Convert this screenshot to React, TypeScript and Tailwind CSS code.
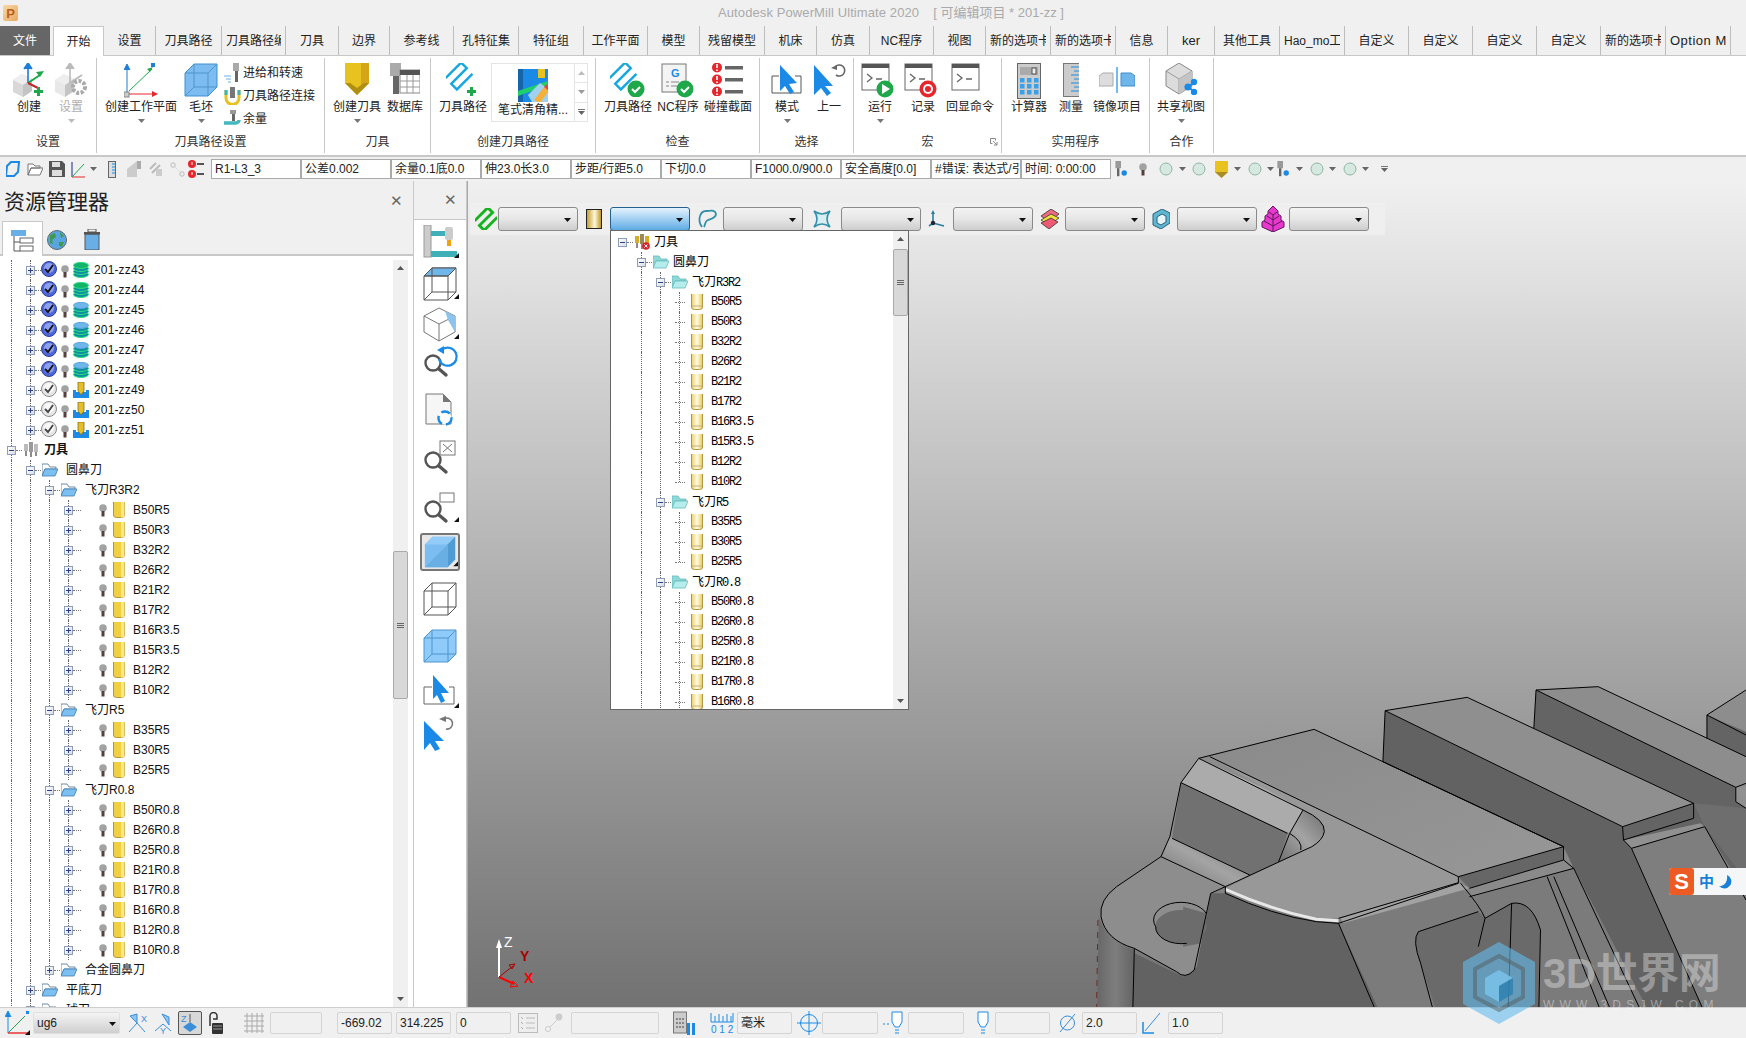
import React from 'react'

const S = ({ w, h, v, children, className }: { w: number; h: number; v?: string; children: React.ReactNode; className?: string }) => (
  <svg width={w} height={h} viewBox={v ?? `0 0 ${w} ${h}`} className={`block shrink-0 ${className ?? ''}`}>
    {children}
  </svg>
)

const BLUE = '#1a8ae6'
const GREEN = '#1fa84a'

// ── small shared drawings ──
const Caret = ({ c = '#666' }: { c?: string }) => (
  <S w={7} h={4}><path d="M0 0h7L3.5 4z" fill={c} /></S>
)
const Plus = () => <path d="M0 5h3V2h3v3h3v3H6v3H3V8H0z" fill={GREEN} />
const CheckBadge = ({ x, y }: { x: number; y: number }) => (
  <g transform={`translate(${x} ${y})`}>
    <circle r="8.5" fill="#1fa84a" />
    <path d="M-4 0l3 3 5-5" stroke="#fff" strokeWidth="2" fill="none" />
  </g>
)
const Meander = ({ c, sw = 2.4 }: { c: string; sw?: number }) => (
  <path d="M2 5H24V13H2V21H24" transform="rotate(-45 13 13)" fill="none" stroke={c} strokeWidth={sw} />
)
const GrayCube = ({ o = '#d8d8d8' }: { o?: string }) => (
  <g>
    <path d="M0 8l9-6 10 5v12l-9 6-10-5z" fill={o} />
    <path d="M0 8l10 5 9-6-10-5z" fill="#eeeeee" />
    <path d="M10 13v12l9-6V7z" fill="#c4c4c4" />
  </g>
)
const Undo = ({ c = '#666', w = 15 }: { c?: string; w?: number }) => (
  <S w={w} h={w} v="0 0 15 15">
    <path d="M4 4a5.5 5.5 0 1 1 1 8" stroke={c} strokeWidth="1.6" fill="none" />
    <path d="M0 5l6-3v5z" fill={c} />
  </S>
)
const Terminal = ({ badge }: { badge?: React.ReactNode }) => (
  <S w={38} h={36}>
    <rect x="1" y="1" width="27" height="26" fill="#fff" stroke="#666" />
    <rect x="1" y="1" width="27" height="4" fill="#555" />
    <path d="M6 11l5 4-5 4M15 16h6" stroke="#666" strokeWidth="1.3" fill="none" />
    {badge}
  </S>
)
const Magnifier = () => (
  <g>
    <circle cx="11" cy="14" r="7.5" fill="#fff" stroke="#555" strokeWidth="2.4" />
    <path d="M17 20l7 6" stroke="#555" strokeWidth="3.4" strokeLinecap="round" />
  </g>
)
const Corner = () => <path d="M38 28v5h-5z" fill="#111" />
const Cube3 = ({ fill, top, stroke = '#555' }: { fill?: string; top?: string; stroke?: string }) => (
  <g fill="none" stroke={stroke} strokeWidth="1">
    <path d="M3 10l8-8h24v24l-8 8H3z" fill={fill ?? 'none'} />
    {top ? <path d="M3 10l8-8h24l-8 8z" fill={top} /> : null}
    <path d="M3 10h24v24M27 10l8-8M11 2v24h24M11 26l-8 8" />
  </g>
)
const ToolBig = ({ w = 24, h = 32 }: { w?: number; h?: number }) => (
  <S w={w} h={h} v="0 0 24 32">
    <path d="M0 0h24v20L12 32 0 20z" fill="#e8c21e" />
    <path d="M16 0h8v20l-8 8z" fill="#d4a516" />
    <path d="M0 20l12 12 12-12-5 0-7 5-7-5z" fill="#b08f10" />
  </S>
)
const Spindle = ({ h = 16, eye }: { h?: number; eye?: boolean }) => (
  <S w={16} h={h} v="0 0 16 20">
    <rect x="1" y="0" width="7" height="9" fill="#999" />
    <path d="M3 9h3v10H3z" fill="#666" />
    {eye ? <circle cx="12" cy="15" r="3.4" fill={BLUE} /> : null}
  </S>
)
const Orb = () => <S w={14} h={14}><circle cx="7" cy="7" r="6" fill="#d6e9e0" stroke="#8fb5a5" /></S>

// ── tree icons ──
const Bulb = () => (
  <S w={8} h={13}>
    <circle cx="4" cy="4" r="3.8" fill="#a2a2a2" />
    <rect x="2.5" y="7" width="3" height="5.5" fill="#54403f" />
  </S>
)
const TreeBox = ({ open }: { open?: boolean }) => (
  <span className="relative z-10 flex h-[9px] w-[9px] shrink-0 items-center justify-center border border-[#8f9db5] bg-gradient-to-br from-white to-[#d8dde6]">
    <span className="absolute h-px w-[5px] bg-[#2c3f8a]" />
    {open ? null : <span className="absolute h-[5px] w-px bg-[#2c3f8a]" />}
  </span>
)
const Folder = ({ teal }: { teal?: boolean }) => (
  <S w={16} h={14}>
    <path d="M0 1h6l2 3h6v2H3L0 13z" fill={teal ? '#8fd8d8' : '#fff'} stroke={teal ? '#6bb' : '#4a6f8f'} strokeWidth=".8" />
    <path d="M3 6h13l-3 7H0z" fill={teal ? '#b5ecec' : '#7cc0f2'} stroke={teal ? '#6bb' : '#3f7fb5'} strokeWidth=".8" />
  </S>
)
const GoldTool = ({ solid }: { solid?: boolean }) => (
  <S w={12} h={16}>
    <defs>
      <linearGradient id="gt" x1="0" x2="1" y1="0" y2="0">
        <stop offset="0" stopColor="#ecd06a" />
        <stop offset=".5" stopColor="#fffbe6" />
        <stop offset="1" stopColor="#ecca58" />
      </linearGradient>
    </defs>
    <path d="M.5 0v13q0 2.5 3 2.5h5q3 0 3-2.5V0" fill={solid ? '#f0cf40' : 'url(#gt)'} stroke="#b0963c" />
    {solid ? <path d="M8 0h3.5v13q0 2.5-3 2.5H8z" fill="#f8e88a" /> : <path d="M1 12h10" stroke="#c9b27a" />}
  </S>
)
const Check = ({ on }: { on?: boolean }) => (
  <S w={16} h={16}>
    <circle cx="8" cy="8" r="7.5" fill={on ? '#4f68d8' : '#e6e6e6'} stroke={on ? '#2f3f9a' : '#8a8a8a'} />
    <circle cx="8" cy="7" r="5" fill={on ? '#8d9ff0' : '#f8f8f8'} />
    <path d="M4 8l3 3 5-7" stroke={on ? '#111' : '#444'} strokeWidth="1.8" fill="none" />
  </S>
)
const Stack = ({ top }: { top: string }) => (
  <S w={16} h={16}>
    {[12.5, 9.5, 6.5].map((y) => (
      <ellipse key={y} cx="8" cy={y} rx="7.5" ry="3" fill="#0f8fa0" stroke="#2ce080" />
    ))}
    <ellipse cx="8" cy="3.4" rx="7.5" ry="3" fill={top} stroke={top === '#6fb6ea' ? '#5aa5dc' : '#2ce080'} />
  </S>
)
const PathTool = () => (
  <S w={16} h={16}>
    <path d="M0 8l3 0 0 4h10V8h3v8H0z" fill={BLUE} />
    <path d="M0 10h16v6H0z" fill={BLUE} />
    <path d="M5 0h6v9l-3 4-3-4z" fill="#e3bf2c" stroke="#7a5f10" strokeWidth=".7" />
  </S>
)
const TreeRoot = ({ red }: { red?: boolean }) => (
  <S w={16} h={16}>
    <rect x="1" y="2" width="4" height="7" fill={red ? '#d9a928' : '#bbb'} />
    <rect x="6" y="0" width="4" height="10" fill={red ? '#9a8a5a' : '#999'} />
    <rect x="11" y="2" width="4" height="8" fill={red ? '#d9a928' : '#bbb'} />
    <path d="M3 9v5M8 10v5M13 10v4" stroke="#666" strokeWidth="1.5" />
    {red ? <><circle cx="12" cy="12" r="3.8" fill="#d8232a" /><path d="M10.5 10.5l3 3M13.5 10.5l-3 3" stroke="#fff" /></> : null}
  </S>
)

// ── tree rows ──
const Guides = ({ xs, last }: { xs: number[]; last?: boolean }) => (
  <>
    {xs.map((x, i) => (
      <span
        key={x}
        className={`absolute top-0 border-l border-dotted border-[#666] ${last && i === xs.length - 1 ? 'h-1/2' : 'h-full'}`}
        style={{ left: x }}
      />
    ))}
  </>
)

const Dots = ({ w = 6 }: { w?: number }) => (
  <span className="shrink-0 border-t border-dotted border-[#777]" style={{ width: w }} />
)

type Node = { d: number; t: string; k: 'zz' | 'zzp' | 'zzt' | 'root' | 'folder' | 'leaf'; open?: boolean }

const zz = (n: number, k: Node['k']): Node => ({ d: 1, t: `201-zz${n}`, k })
const leaves = (names: string[]): Node[] => names.map((t) => ({ d: 3, t, k: 'leaf' as const }))
const R3R2 = ['B50R5', 'B50R3', 'B32R2', 'B26R2', 'B21R2', 'B17R2', 'B16R3.5', 'B15R3.5', 'B12R2', 'B10R2']
const R5 = ['B35R5', 'B30R5', 'B25R5']

const LEFT: Node[] = [
  zz(43, 'zz'), zz(44, 'zz'), zz(45, 'zzp'), zz(46, 'zzp'), zz(47, 'zzp'), zz(48, 'zzp'),
  zz(49, 'zzt'), zz(50, 'zzt'), zz(51, 'zzt'),
  { d: 0, t: '刀具', k: 'root', open: true },
  { d: 1, t: '圆鼻刀', k: 'folder', open: true },
  { d: 2, t: '飞刀R3R2', k: 'folder', open: true },
  ...leaves(R3R2),
  { d: 2, t: '飞刀R5', k: 'folder', open: true },
  ...leaves(R5),
  { d: 2, t: '飞刀R0.8', k: 'folder', open: true },
  ...leaves(['B50R0.8', 'B26R0.8', 'B25R0.8', 'B21R0.8', 'B17R0.8', 'B16R0.8', 'B12R0.8', 'B10R0.8']),
  { d: 2, t: '合金圆鼻刀', k: 'folder' },
  { d: 1, t: '平底刀', k: 'folder' },
  { d: 1, t: '球刀', k: 'folder' },
]

const LeftRow = ({ n }: { n: Node }) => {
  const xs = [11, 30, 49, 68].slice(0, n.d + 1)
  return (
    <div className="relative flex h-5 items-center whitespace-nowrap" style={{ paddingLeft: 7 + 19 * n.d }}>
      <Guides xs={xs} />
      <TreeBox open={n.open} />
      {n.k === 'root' && (
        <>
          <Dots />
          <span className="ml-px"><TreeRoot /></span>
          <span className="ml-[5px] font-bold">{n.t}</span>
        </>
      )}
      {n.k === 'folder' && (
        <>
          <Dots />
          <span className="ml-px"><Folder /></span>
          <span className="ml-2">{n.t}</span>
        </>
      )}
      {n.k === 'leaf' && (
        <>
          <Dots w={8} />
          <span className="ml-[18px]"><Bulb /></span>
          <span className="ml-[6px]"><GoldTool solid /></span>
          <span className="ml-2">{n.t}</span>
        </>
      )}
      {(n.k === 'zz' || n.k === 'zzp' || n.k === 'zzt') && (
        <>
          <Dots />
          <span className="relative z-10 -mt-0.5"><Check on={n.k !== 'zzt'} /></span>
          <span className="relative z-10 ml-1 mt-0.5"><Bulb /></span>
          <span className="relative z-10 ml-1">
            {n.k === 'zzt' ? <PathTool /> : <Stack top={n.k === 'zz' ? '#12b36a' : '#6fb6ea'} />}
          </span>
          <span className="ml-[5px] tracking-[0.15px]">{n.t}</span>
        </>
      )}
    </div>
  )
}

const MONO = "font-['Liberation_Mono'] tracking-[-1.2px]"
const DROP: (Node & { last?: boolean; cjk?: string })[] = [
  { d: 0, t: '刀具', k: 'root', open: true },
  { d: 1, t: '圆鼻刀', k: 'folder', open: true },
  { d: 2, t: 'R3R2', cjk: '飞刀', k: 'folder', open: true },
  ...leaves(R3R2).map((n, i) => ({ ...n, last: i === 9 })),
  { d: 2, t: 'R5', cjk: '飞刀', k: 'folder', open: true },
  ...leaves(R5).map((n, i) => ({ ...n, last: i === 2 })),
  { d: 2, t: 'R0.8', cjk: '飞刀', k: 'folder', open: true },
  ...leaves(['B50R0.8', 'B26R0.8', 'B25R0.8', 'B21R0.8', 'B17R0.8', 'B16R0.8']),
]

const DropRow = ({ n }: { n: (typeof DROP)[number] }) => {
  const xs = [30, 49, 68].slice(0, n.d)
  return (
    <div className="relative flex h-5 items-center whitespace-nowrap text-black" style={{ paddingLeft: 7 + 19 * n.d }}>
      <Guides xs={xs} last={n.last} />
      {n.k === 'leaf' ? (
        <>
          <Dots w={10} />
          <span className="ml-[6px]"><GoldTool /></span>
          <span className={`ml-2 ${MONO}`}>{n.t}</span>
        </>
      ) : (
        <>
          <TreeBox open />
          <Dots />
          <span className="ml-px">{n.k === 'root' ? <TreeRoot red /> : <Folder teal />}</span>
          <span className="ml-1">
            {n.cjk ? <>{n.cjk}<span className={MONO}>{n.t}</span></> : n.t}
          </span>
        </>
      )}
    </div>
  )
}

// ── ribbon ──
const TABS: [string, number][] = [
  ['设置', 52], ['刀具路径', 66], ['刀具路径编辑', 64], ['刀具', 53], ['边界', 51], ['参考线', 64], ['孔特征集', 65], ['特征组', 65],
  ['工作平面', 64], ['模型', 52], ['残留模型', 65], ['机床', 52], ['仿真', 53], ['NC程序', 64], ['视图', 52], ['新的选项卡', 65], ['新的选项卡', 65],
  ['信息', 52], ['ker', 47], ['其他工具', 65], ['Hao_mo工具', 65], ['自定义', 64], ['自定义', 64], ['自定义', 64], ['自定义', 64], ['新的选项卡', 65], ['Option Manager', 65],
]

const Btn = ({ w, label, caret, muted, children }: { w: string; label: string; caret?: boolean; muted?: boolean; children: React.ReactNode }) => (
  <div className={`flex shrink-0 flex-col items-center ${w}`}>
    <div className="flex h-[37px] w-full items-start justify-center">{children}</div>
    <div className={`h-[14px] whitespace-nowrap leading-[14px] ${muted ? 'text-[#b0b0b0]' : ''}`}>{label}</div>
    {caret ? <div className="mt-[5px]"><Caret c={muted ? '#bbb' : '#777'} /></div> : null}
  </div>
)

const Group = ({ w, pl, label, children, corner }: { w: string; pl: string; label: string; children: React.ReactNode; corner?: boolean }) => (
  <div className={`relative flex h-[95px] shrink-0 flex-col border-r border-[#c8c8c8] ${w}`}>
    <div className={`flex h-[73px] pt-[5px] ${pl}`}>{children}</div>
    <div className="flex h-[22px] items-center justify-center leading-none text-[#333]">{label}</div>
    {corner ? (
      <span className="absolute bottom-[7px] right-[3px]">
        <S w={8} h={8}><path d="M.5.5h5v2M.5.5v5h2M3 3l4 4M7 4v3H4" stroke="#888" fill="none" /></S>
      </span>
    ) : null}
  </div>
)

const SmallRow = ({ label, icon }: { label: string; icon: React.ReactNode }) => (
  <div className="flex h-[23px] items-center gap-[3px] whitespace-nowrap">
    <span className="flex w-[16px] justify-center">{icon}</span>
    <span>{label}</span>
  </div>
)

const Ribbon = () => (
  <div className="flex h-[101px] shrink-0 border-b-2 border-[#c8c8c8] bg-white pt-[2px] text-[12px] text-[#222]">
    <Group w="w-[97px]" pl="pl-2" label="设置">
      <Btn w="w-[42px]" label="创建">
        <S w={34} h={34}>
          <g transform="translate(1 9)"><GrayCube /></g>
          <path d="M16 20V2M12 6l4-6 4 6" stroke="#1c7fd6" strokeWidth="1.6" fill="#1c7fd6" />
          <path d="M16 20l12-8" stroke={GREEN} strokeWidth="2" /><path d="M32 8l-8 1 4 5z" fill={GREEN} />
          <path d="M16 20l10 5" stroke="#c0262a" strokeWidth="2" />
          <g transform="translate(22 22)"><Plus /></g>
        </S>
      </Btn>
      <Btn w="w-[42px]" label="设置" caret muted>
        <S w={34} h={34}>
          <g transform="translate(1 9)"><GrayCube o="#e8e8e8" /></g>
          <path d="M16 20V2M12 6l4-6 4 6" stroke="#bbb" strokeWidth="1.6" fill="#bbb" />
          <path d="M16 20l12-8" stroke="#bbb" strokeWidth="2" />
          <circle cx="25" cy="24" r="6" fill="none" stroke="#aaa" strokeWidth="4" strokeDasharray="3 1.5" />
        </S>
      </Btn>
    </Group>
    <Group w="w-[228px]" pl="pl-[6px]" label="刀具路径设置">
      <Btn w="w-[76px]" label="创建工作平面" caret>
        <S w={34} h={36}>
          <rect x="0" y="29" width="5" height="5" fill="#ccc" stroke="#888" />
          <path d="M3 29V3M0 7l3-6 3 6" stroke="#1c7fd6" strokeWidth="1" fill="#1c7fd6" />
          <path d="M5 28L28 6" stroke={GREEN} /><path d="M29 4l-6 2 3 3z" fill={GREEN} />
          <path d="M5 31h27" stroke="#e5262a" /><path d="M34 31l-6-3v6z" fill="#e5262a" />
          <rect x="27" y="0" width="4" height="4" fill="#1c7fd6" />
        </S>
      </Btn>
      <Btn w="w-[44px]" label="毛坯" caret>
        <S w={34} h={34}>
          <path d="M1 10l9-9h23v23l-9 9H1z" fill="#7cbcf0" stroke="#3f8fd0" />
          <path d="M1 10h23v23M24 10l9-9M10 1v23h23M10 24l-9 9" stroke="#4f95cc" fill="none" />
        </S>
      </Btn>
      <div className="-mt-[2px] ml-[1px] flex flex-col">
        <SmallRow label="进给和转速" icon={
          <S w={16} h={20}><path d="M0 13h7M2 16h5M4 19h3" stroke="#6aaee6" /><rect x="9" y="0" width="6" height="8" fill="#aaa" /><rect x="11" y="8" width="3" height="11" fill="#666" /></S>
        } />
        <SmallRow label="刀具路径连接" icon={
          <S w={17} h={18}><path d="M2 3v8a6 6 0 0 0 13 0V3" stroke="#e8c21e" strokeWidth="3" fill="none" /><path d="M2 3v5M15 3v5" stroke="#3fb5b5" strokeWidth="3" /><rect x="6" y="0" width="5" height="11" fill="#777" /></S>
        } />
        <SmallRow label="余量" icon={
          <S w={17} h={18}><rect x="6" y="0" width="6" height="4" fill="#999" /><rect x="8" y="4" width="3" height="7" fill="#666" /><path d="M0 13h12a3 3 0 0 0 3-3" stroke="#45b7bf" strokeWidth="3.5" fill="none" /></S>
        } />
      </div>
    </Group>
    <Group w="w-[106px]" pl="pl-[5px]" label="刀具">
      <Btn w="w-[54px]" label="创建刀具" caret><ToolBig /></Btn>
      <Btn w="w-[42px]" label="数据库">
        <S w={30} h={34}>
          <rect x="0" y="0" width="11" height="13" fill="#aaa" /><rect x="3" y="13" width="6" height="18" fill="#666" />
          <rect x="10" y="7" width="20" height="23" fill="#fff" stroke="#888" /><rect x="10" y="7" width="20" height="5" fill="#555" />
          <path d="M10 18h20M10 24h20M17 12v18M23 12v18" stroke="#999" />
        </S>
      </Btn>
    </Group>
    <Group w="w-[165px]" pl="pl-[5px]" label="创建刀具路径">
      <Btn w="w-[54px]" label="刀具路径">
        <S w={34} h={34}>
          <Meander c="#17a7e0" />
          <g transform="translate(21 22)"><Plus /></g>
        </S>
      </Btn>
      <div className="ml-px flex h-[59px] w-[97px] border border-[#e4e4e4]">
        <div className="flex w-[82px] flex-col items-center pt-[5px]">
          <S w={30} h={33}>
            <rect x="0" y="0" width="30" height="33" fill="#1a8ae6" /><path d="M0 0h5v33H0z" fill="#1565a8" />
            <path d="M0 22l30-10v4L0 27z" fill="#1fd06a" /><path d="M20 0h7v9h-7z" fill="#e8c21e" />
            <path d="M10 26l12-12 8 6v13H14z" fill="#9fd2f2" />
            <path d="M16 31l10-13 5 4-9 12z" fill="#f4b23c" /><path d="M26 18l3-3 5 4-3 3z" fill="#e5453a" />
          </S>
          <span className="mt-[1px] whitespace-nowrap leading-[14px]">笔式清角精...</span>
        </div>
        <div className="flex flex-1 flex-col border-l border-[#e4e4e4]">
          <div className="flex flex-1 items-center justify-center border-b border-[#e4e4e4]"><S w={7} h={4}><path d="M0 4h7L3.5 0z" fill="#bbb" /></S></div>
          <div className="flex flex-1 items-center justify-center border-b border-[#e4e4e4]"><Caret c="#999" /></div>
          <div className="flex flex-1 flex-col items-center justify-center gap-px"><span className="h-px w-[7px] bg-[#777]" /><Caret /></div>
        </div>
      </div>
    </Group>
    <Group w="w-[164px]" pl="pl-[6px]" label="检查">
      <Btn w="w-[52px]" label="刀具路径">
        <S w={36} h={34}>
          <Meander c="#17a7e0" />
          <CheckBadge x={26} y={26} />
        </S>
      </Btn>
      <Btn w="w-[48px]" label="NC程序">
        <S w={34} h={35}>
          <rect x="1" y="1" width="24" height="28" fill="#f4f4f4" stroke="#777" />
          <text x="10" y="14" fontSize="11" fontWeight="700" fill="#1a8ae6" fontFamily="Liberation Sans">G</text>
          <path d="M5 19h3M10 19h8M5 23h3M10 23h6" stroke="#888" />
          <CheckBadge x={24} y={26} />
        </S>
      </Btn>
      <Btn w="w-[52px]" label="碰撞截面">
        <S w={32} h={33}>
          {[0, 12, 24].map((y) => (
            <g key={y}>
              <circle cx="5" cy={y + 4.5} r="5" fill="#e5262a" />
              <path d={`M5 ${y + 1}v4M5 ${y + 6.5}v1.5`} stroke="#fff" strokeWidth="1.6" />
              <rect x="13" y={y + 3} width="18" height="3.5" fill="#666" />
            </g>
          ))}
        </S>
      </Btn>
    </Group>
    <Group w="w-[94px]" pl="pl-[7px]" label="选择">
      <Btn w="w-[40px]" label="模式" caret>
        <S w={32} h={34}>
          <path d="M1 13v17h29V13h-6M1 13h7" stroke="#555" fill="none" />
          <path d="M9 2l17 18-8 1 5 8-4 2-5-8-5 5z" fill={BLUE} />
        </S>
      </Btn>
      <Btn w="w-[44px]" label="上一">
        <div className="relative">
          <S w={34} h={34}><path d="M2 2l19 21-8 0 6 7-4 3-6-8-7 7z" fill={BLUE} /></S>
          <span className="absolute right-0 top-0"><Undo /></span>
        </div>
      </Btn>
    </Group>
    <Group w="w-[148px]" pl="pl-[2px]" label="宏" corner>
      <Btn w="w-[48px]" label="运行" caret>
        <Terminal badge={<g><circle cx="24" cy="26" r="8.5" fill={GREEN} /><path d="M21 21l8 5-8 5z" fill="#fff" /></g>} />
      </Btn>
      <Btn w="w-[38px]" label="记录">
        <Terminal badge={<g><circle cx="24" cy="26" r="8.5" fill="#e5262a" /><circle cx="24" cy="26" r="5" fill="#fff" /><circle cx="24" cy="26" r="3" fill="#e5262a" /></g>} />
      </Btn>
      <Btn w="w-[56px]" label="回显命令"><Terminal /></Btn>
    </Group>
    <Group w="w-[148px]" pl="pl-[4px]" label="实用程序">
      <Btn w="w-[46px]" label="计算器">
        <S w={24} h={36}>
          <rect x=".5" y=".5" width="23" height="35" fill="#ccc" stroke="#666" />
          <rect x="3" y="4" width="18" height="8" fill="#aaa" /><rect x="15" y="5" width="4" height="6" fill="#eee" stroke="#555" />
          {[15, 21, 27].map((y) => [3, 10, 17].map((x) => <rect key={`${x}${y}`} x={x} y={y} width="4.5" height="4.5" fill="#3aa0ea" />))}
        </S>
      </Btn>
      <Btn w="w-[38px]" label="测量">
        <S w={16} h={34}>
          <rect x=".5" y=".5" width="16" height="33" fill="#ccc" stroke="#777" />
          <path d="M16 4h-8M16 8h-5M16 12h-8M16 16h-5M16 20h-8M16 24h-5M16 28h-8" stroke={BLUE} />
        </S>
      </Btn>
      <Btn w="w-[54px]" label="镜像项目">
        <S w={36} h={30}>
          <path d="M0 13l4-3h10v13H0z" fill="#ddd" stroke="#aaa" /><path d="M22 10h10l4 3v10H22z" fill="#6fb6ea" stroke="#3f8fd0" />
          <path d="M18 4v26" stroke={BLUE} strokeWidth="1.2" />
        </S>
      </Btn>
    </Group>
    <Group w="w-[64px]" pl="pl-[3px]" label="合作">
      <Btn w="w-[56px]" label="共享视图" caret>
        <S w={32} h={32}>
          <path d="M1 8l13-8 13 8v15L14 31 1 23z" fill="#dcdcdc" stroke="#888" />
          <path d="M1 8l13 8 13-8M14 16v15" stroke="#999" fill="none" /><path d="M14 16l13-8v15l-13 8z" fill="#c4c4c4" />
          <path d="M23 24l7-5M23 24l7 5" stroke={BLUE} strokeWidth="2" />
          <circle cx="23" cy="24" r="3.6" fill={BLUE} /><circle cx="29" cy="19" r="3.2" fill={BLUE} /><circle cx="29" cy="29" r="3.2" fill={BLUE} />
        </S>
      </Btn>
    </Group>
  </div>
)

const FIELDS = ['R1-L3_3', '公差0.002', '余量0.1底0.0', '伸23.0长3.0', '步距/行距5.0', '下切0.0', 'F1000.0/900.0', '安全高度[0.0]', '#错误: 表达式/引用', '时间: 0:00:00']

const QuickBar = () => (
  <div className="flex h-[24px] shrink-0 items-center text-[12px] text-[#222]">
    <div className="ml-[6px] flex w-[205px] items-center">
      <span className="w-[18px]"><S w={14} h={16}><path d="M1 5l4-4h8l-1 10-4 4H0z" fill="none" stroke={BLUE} strokeWidth="2" /></S></span>
      <span className="ml-[3px] w-[22px]"><S w={16} h={13}><path d="M1 1h5l2 2h5v2H4L1 12zM4 5h12l-3 7H1z" fill="#fff" stroke="#777" /></S></span>
      <span className="w-[22px]"><S w={16} h={16}><path d="M0 0h13l3 3v13H0z" fill="#555" /><rect x="3" y="1" width="8" height="5" fill="#ddd" /><rect x="3" y="9" width="10" height="6" fill="#ddd" /></S></span>
      <span className="w-[16px]"><S w={15} h={17}><path d="M1 16V1M1 16h13" stroke="#e5262a" /><path d="M1 1v15" stroke={BLUE} /><path d="M1 16L13 3" stroke={GREEN} /></S></span>
      <span className="ml-[3px] w-[16px]"><Caret /></span>
      <span className="ml-[2px] w-[19px]"><S w={8} h={17}><rect x=".5" y=".5" width="7" height="16" fill="#ddd" stroke="#666" /><path d="M7 3H4M7 6H4M7 9H4M7 12H4" stroke={BLUE} /></S></span>
      <span className="w-[21px]"><S w={15} h={16}><path d="M0 16V8l10-8v16z" fill="#ccc" /><rect x="10" y="0" width="4" height="8" fill="#aaa" /></S></span>
      <span className="w-[22px]"><S w={15} h={16}><path d="M2 8l6-6M4 12l8-8" stroke="#bbb" strokeWidth="2" /><rect x="8" y="8" width="6" height="7" fill="#ccc" /></S></span>
      <span className="w-[18px]"><S w={15} h={15}><circle cx="3" cy="3" r="2.2" fill="none" stroke="#bbb" /><circle cx="12" cy="12" r="2.2" fill="none" stroke="#bbb" /><path d="M5 5l5 5" stroke="#ccc" strokeDasharray="1 1" /></S></span>
      <span><S w={16} h={18}><circle cx="4" cy="4" r="4" fill="#e5262a" /><circle cx="4" cy="14" r="4" fill="#e5262a" /><rect x="9" y="3" width="7" height="2" fill="#555" /><rect x="9" y="13" width="7" height="2" fill="#555" /><path d="M4 2v3M4 12v3" stroke="#fff" /></S></span>
    </div>
    <div className="flex">
      {FIELDS.map((f) => (
        <div key={f} className="h-[20px] w-[90px] shrink-0 overflow-hidden whitespace-nowrap border border-[#aaa] bg-white pl-[3px] leading-[18px]">{f}</div>
      ))}
    </div>
    <div className="flex items-center">
      <span className="ml-[2px]"><Spindle eye /></span>
      <span className="ml-[10px]"><Bulb /></span>
      <span className="ml-3"><Orb /></span>
      <span className="ml-[6px]"><Caret /></span>
      <span className="ml-[6px]"><Orb /></span>
      <span className="ml-[9px]"><S w={13} h={17}><path d="M0 0h13v11l-6.5 6L0 11z" fill="#e8c21e" /><path d="M0 11l6.5 6 6.5-6z" fill="#a88b2a" /></S></span>
      <span className="ml-[6px]"><Caret /></span>
      <span className="ml-[7px]"><Orb /></span>
      <span className="ml-[5px]"><Caret /></span>
      <span className="ml-px"><Spindle eye /></span>
      <span className="ml-[5px]"><Caret /></span>
      <span className="ml-[7px]"><Orb /></span>
      <span className="ml-[5px]"><Caret /></span>
      <span className="ml-[7px]"><Orb /></span>
      <span className="ml-[5px]"><Caret /></span>
      <span className="ml-3 flex flex-col items-center gap-px"><span className="h-px w-[7px] bg-[#777]" /><Caret /></span>
    </div>
  </div>
)

// ── viewport bits ──
const Combo = ({ active }: { active?: boolean }) => (
  <div className={`relative h-[24px] w-[80px] shrink-0 rounded-[3px] border ${active ? 'border-[#25618f] bg-gradient-to-b from-[#e4f3fd] to-[#5cabe4]' : 'border-[#8a8a8a] bg-gradient-to-b from-[#f3f3f3] via-[#e6e6e6] to-[#cdcdcd]'}`}>
    <span className="absolute right-[6px] top-[10px]"><Caret c="#111" /></span>
  </div>
)

const Slot = ({ w, children }: { w: string; children?: React.ReactNode }) => (
  <div className={`flex shrink-0 items-center justify-center ${w}`}>{children}</div>
)

const ViewBar = () => (
  <div className="absolute left-[2px] top-[22px] flex h-[32px] w-[915px] items-center bg-[#f0f0f0]/80 pl-[3px]">
    <Slot w="w-[25px]">
      <S w={22} h={22} v="0 0 26 26"><Meander c="#17b21f" sw={3.4} /></S>
    </Slot>
    <Combo />
    <Slot w="w-[32px]">
      <S w={16} h={20}>
        <defs><linearGradient id="gb" x1="0" x2="1" y1="0" y2="0"><stop offset="0" stopColor="#c29a24" /><stop offset=".55" stopColor="#fff7d8" /><stop offset="1" stopColor="#b58f1f" /></linearGradient></defs>
        <rect x=".5" y=".5" width="15" height="19" fill="url(#gb)" stroke="#222" />
      </S>
    </Slot>
    <Combo active />
    <Slot w="w-[33px]"><S w={20} h={20}><path d="M5 18C0 11 3 2 9 2 13 2 18 0 19 5 19 9 14 10 11 11 8 12 8 16 7 18" fill="none" stroke="#3390a8" strokeWidth="1.8" /></S></Slot>
    <Combo />
    <Slot w="w-[38px]"><S w={18} h={18}><path d="M1 1Q9 7 17 1 11 9 17 17 9 11 1 17 7 9 1 1z" fill="#d8eef2" stroke="#3390a8" strokeWidth="1.6" /></S></Slot>
    <Combo />
    <Slot w="w-[32px]"><S w={18} h={18}><path d="M5 13V2M5 13l11 3M5 13l-4 3" stroke="#2a7f9f" strokeWidth="1.6" /><circle cx="5" cy="13" r="2.2" fill="#223" /><path d="M3 4l2-4 2 4z" fill="#2a7f9f" /></S></Slot>
    <Combo />
    <Slot w="w-[32px]"><S w={19} h={20}><path d="M1 7L11 0l8 5-10 8z" fill="#ee6b84" stroke="#333" strokeWidth=".8" /><path d="M1 11l10-6 8 4-10 7z" fill="#f2e23e" stroke="#333" strokeWidth=".8" /><path d="M1 14l10-5 7 4-9 7z" fill="#ee5a74" stroke="#333" strokeWidth=".8" /></S></Slot>
    <Combo />
    <Slot w="w-[32px]"><S w={18} h={20}><path d="M1 5l9-5 8 4v10l-9 6-8-4z" fill="#5fb8d0" stroke="#2a5f7f" /><path d="M5 8l5-3 4 2v6l-5 3-4-2z" fill="#e8f6fb" stroke="#2a5f7f" /></S></Slot>
    <Combo />
    <Slot w="w-[32px]"><S w={24} h={26}><path d="M12 0l5 5v3l3 2v4l3 2v5l-11 5-11-5v-5l3-2v-4l3-2V5z" fill="#e838d0" stroke="#5a1a55" /><path d="M3 15l9 5 9-5M6 10l6 4 6-4M8 6l4 3 4-3M12 9v17" stroke="#5a1a55" fill="none" /></S></Slot>
    <Combo />
  </div>
)

const Scrollbar = ({ gapTop, thumb, className }: { gapTop: string; thumb: string; className?: string }) => (
  <div className={`flex w-[15px] shrink-0 flex-col items-center bg-[#f0f0f0] ${className ?? ''}`}>
    <div className="flex h-[16px] w-full shrink-0 items-center justify-center"><S w={7} h={4}><path d="M0 4h7L3.5 0z" fill="#555" /></S></div>
    <div className={`w-full shrink-0 ${gapTop}`} />
    <div className={`flex w-full shrink-0 flex-col items-center justify-center gap-px rounded-[2px] border border-[#aaa] bg-[#d8d8d8] ${thumb}`}>
      <span className="h-px w-[7px] bg-[#666]" /><span className="h-px w-[7px] bg-[#666]" /><span className="h-px w-[7px] bg-[#666]" />
    </div>
    <div className="flex-1" />
    <div className="flex h-[16px] w-full shrink-0 items-center justify-center"><Caret c="#555" /></div>
  </div>
)

const Model = () => (
  <svg
    width={696}
    height={378}
    viewBox="0 0 1568 1134"
    preserveAspectRatio="none"
    className="absolute left-[582px] top-[479px] [&_*]:[vector-effect:non-scaling-stroke]"
  >
    <defs>
      <linearGradient id="top" x1="0" x2="1" y1="0" y2="1"><stop offset="0" stopColor="#8a8a8a" /><stop offset="1" stopColor="#979797" /></linearGradient>
      <linearGradient id="fil" x1="0" x2="1" y1="1" y2="0"><stop offset="0" stopColor="#6e6e6e" /><stop offset=".5" stopColor="#a4a4a4" /><stop offset="1" stopColor="#6e6e6e" /></linearGradient>
      <linearGradient id="cyl" x1="0" x2="1" y1="0" y2="0"><stop offset="0" stopColor="#666" /><stop offset=".5" stopColor="#7e7e7e" /><stop offset="1" stopColor="#636363" /></linearGradient>
    </defs>
    <g stroke="none">
      <path d="M1480 165L1568 90V215zM1095 90L1235 80 1568 290V380L1545 382z" fill="#8d8d8d" />
      <path d="M1480 165L1568 215V290L1480 235zM1095 90L1545 382 1545 425 1568 445V1134H1500L1310 565 1292 540 1290 500 1450 430 1090 205z" fill="#646464" />
      <path d="M1450 430L1568 445V660L1475 500z" fill="#6e6e6e" />
      <path d="M755 152L1290 500 1292 540 1310 565 1500 1134H1380L1180 625 1157 560 750 305z" fill="#626262" />
      <path d="M755 152L940 112 1450 430 1290 500z" fill="#8f8f8f" />
      <path d="M1292 540L1465 490 1475 500 1310 565z" fill="#909090" />
      <path d="M1475 500L1568 700V1134H1500L1310 565z" fill="#7e7e7e" />
      <path d="M655 790L920 680 950 710 1180 625 1380 1134H760z" fill="#7b7b7b" />
      <path d="M830 815L965 755 980 775 1040 730Q1085 720 1105 810L1100 1134H890L835 910Q815 840 830 815z" fill="#6a6a6a" />
      <path d="M395 700Q500 765 600 785L650 790 770 1134H185L190 880 300 950 330 920 362 700z" fill="#626262" />
      <path d="M110 770Q125 840 190 870L185 1134H105z" fill="url(#cyl)" />
      <path d="M150 680L250 590 395 680 362 700 330 920Q305 960 285 935L190 865Q125 840 115 770 110 720 150 680z" fill="#8d8d8d" />
      <ellipse cx="295" cy="800" rx="58" ry="50" fill="#6c6c6c" />
      <path d="M352 760L340 850 300 860V740z" fill="#6c6c6c" />
      <path d="M270 530L450 645 395 680 250 590z" fill="url(#fil)" />
      <path d="M295 368L535 520 515 605 450 645 275 535z" fill="#717171" />
      <path d="M335 295L360 290 570 450 540 520 295 368z" fill="#ababab" />
      <path d="M570 450Q620 480 618 515 615 540 590 560L515 605 540 520z" fill="url(#fil)" />
      <path d="M335 295L595 208 1157 560 920 650z" fill="url(#top)" />
      <path d="M360 290L920 650V670L650 775Q600 785 520 755L395 685 590 560Q615 540 618 515 620 480 570 450z" fill="#989898" />
      <path d="M920 650L1157 560V600L945 685z" fill="#666" />
      <path d="M945 685L1157 600 1180 625 950 710z" fill="#8a8a8a" />
      <path d="M655 775L920 668 945 685 660 790z" fill="#a2a2a2" />
    </g>
    <path d="M395 688Q500 750 600 778L650 782" stroke="#e8e8e8" strokeWidth="3" fill="none" />
    <path d="M108 780L105 1040" stroke="#6a2a20" strokeDasharray="6 6" strokeWidth="1" fill="none" />
    <g fill="none" stroke="#000" strokeWidth="1">
      <path d="M335 295L595 208 1157 560V600L1180 625 1360 1134" />
      <path d="M360 290L920 650 1157 560M920 650V670L650 790 760 1134M650 775L920 668M945 685L1157 600M945 710L1180 625" />
      <path d="M335 295L295 368 270 530 250 590 150 680Q110 720 115 770 125 840 190 865L285 935Q305 960 325 930L362 700 395 680" />
      <path d="M295 368L535 520M335 295L570 450Q620 480 618 515 615 540 590 560L395 680M570 450L540 520 515 605M540 520Q570 545 565 570" />
      <path d="M275 535L450 645M250 590L395 680M395 680V700Q500 765 600 785L650 790M190 865L185 1134" />
      <path d="M925 670Q970 740 980 775L965 860M830 815L965 755M830 815Q815 840 835 910L880 1134M980 775L1040 730Q1085 720 1105 810L1100 1134M1040 730L1030 1134" />
      <path d="M1120 650L1265 1134M1135 650L1290 1134M238 800a58 50 0 0 1 114-40M238 800a58 50 0 0 0 70 50" />
      <path d="M755 152L750 305 1157 560M755 152L940 112 1450 430 1290 500zM1290 500L1292 540 1310 565 1500 1134M1450 430V475L1292 540M1310 565L1475 500 1568 720" />
      <path d="M1095 90L1235 80 1568 290M1095 90L1090 205M1095 90L1545 382 1568 370M1545 382V425L1568 445M1480 165L1568 90M1480 165V235M1480 165L1568 225" />
    </g>
  </svg>
)

const Triad = () => (
  <svg width={50} height={60} className="absolute left-[25px] top-[752px] font-['Liberation_Sans'] text-[14px]">
    <path d="M6 44V12" stroke="#fff" strokeWidth="2" />
    <path d="M6 6l3 9H3z" fill="#fff" />
    <path d="M6 44l15 7" stroke="#f00" strokeWidth="2" />
    <path d="M25 53l-8 1 3-6z" fill="none" stroke="#f00" />
    <path d="M6 44l14-11" stroke="#a00" />
    <path d="M22 31l-6 1 3 4z" fill="none" stroke="#a00" />
    <text x="11" y="14" fill="#fff">Z</text>
    <text x="27" y="28" fill="#a00" fontWeight="700">Y</text>
    <text x="31" y="50" fill="#f00" fontWeight="700">X</text>
  </svg>
)

// ── side toolbar ──
const SIDE: { mt: string; el: React.ReactNode; corner?: boolean; sel?: boolean }[] = [
  { mt: 'mt-[5px]', corner: true, el: <><rect x="3" y="0" width="7" height="32" fill="#ccc" stroke="#999" /><path d="M10 6h14v5H10zM10 26h26v6H10z" fill="#3fb0b8" /><rect x="24" y="2" width="8" height="13" rx="2" fill="#ccc" /><rect x="26" y="15" width="4" height="6" fill="#f0a010" /></> },
  { mt: 'mt-[5px]', corner: true, el: <Cube3 top="#6fb6ea" /> },
  { mt: 'mt-1', corner: true, el: <><path d="M3 10l15-8 16 8v16l-16 9-15-9z" fill="#fff" stroke="#777" /><path d="M3 10l15 8 16-8M18 18v17" stroke="#777" fill="none" /><path d="M24 5l10 5v16l-7-12z" fill="#8cc4ee" /></> },
  { mt: 'mt-[3px]', el: <><g transform="translate(1 4)"><Magnifier /></g><path d="M22 4a9 9 0 1 1-4 10" stroke={BLUE} strokeWidth="2.2" fill="none" /><path d="M16 5l7-4v8z" fill={BLUE} /></> },
  { mt: 'mt-[11px]', el: <><path d="M5 2h17l8 8v22H5z" fill="#f6f6f6" stroke="#777" /><path d="M22 2l8 8h-8z" fill="#777" /><circle cx="24" cy="26" r="6.5" fill="#fff" stroke={BLUE} strokeWidth="2.4" strokeDasharray="9 4" /></> },
  { mt: 'mt-3', el: <><g transform="translate(1 6)"><Magnifier /></g><rect x="19" y="1" width="15" height="14" fill="#fff" stroke="#777" /><path d="M22 4l9 8M31 4l-9 8" stroke="#777" /></> },
  { mt: 'mt-[13px]', corner: true, el: <><g transform="translate(1 6)"><Magnifier /></g><rect x="19" y="4" width="14" height="9" fill="#fff" stroke="#777" /></> },
  { mt: 'mt-2', sel: true, corner: true, el: <><path d="M3 10l8-8h24v24l-8 8H3z" fill="#7bbdf0" /><path d="M3 10l8-8h24l-8 8z" fill="#93ccf8" /><path d="M27 10l8-8v24l-8 8z" fill="#4f9bd4" /><path d="M3 34L27 10v24z" fill="#6aafe4" /></> },
  { mt: 'mt-[10px]', el: <Cube3 /> },
  { mt: 'mt-[11px]', el: <Cube3 fill="#8fcbfa" stroke="#4f95cc" /> },
  { mt: 'mt-[11px]', corner: true, el: <><path d="M3 12v17h30V12h-5M3 12h8" fill="none" stroke="#666" /><path d="M12 0l16 18-8 0 4 8-4 2-4-8-4 4z" fill={BLUE} /></> },
  { mt: 'mt-1', el: <><path d="M3 6l20 20-9 0 5 8-5 2-5-8-6 7z" fill={BLUE} /><g transform="translate(18 -1)"><path d="M5 5a5.5 5.5 0 1 1 2 10" stroke="#777" strokeWidth="1.6" fill="none" /><path d="M0 5l7-3v6z" fill="#777" /></g></> },
]

// ── status bar ──
const SField = ({ w, children, ml }: { w: string; ml: string; children?: React.ReactNode }) => (
  <div className={`h-[22px] shrink-0 overflow-hidden rounded-[2px] border border-[#d4d4d4] pl-[3px] leading-[20px] ${w} ${ml}`}>{children}</div>
)

const StatusBar = () => (
  <div className="flex h-[31px] shrink-0 items-center border-t border-[#cfcfcf] bg-[#f0f0f0] text-[12px] text-[#222]">
    <span className="ml-[5px]"><S w={25} h={24}><path d="M3 22V3M0 6l3-6 3 6" stroke={BLUE} fill={BLUE} /><path d="M3 22L20 5" stroke={GREEN} /><path d="M3 22h20" stroke="#e5262a" strokeWidth="1.4" /><rect x="21" y="0" width="3" height="3" fill={BLUE} /><path d="M25 24v-5l-5 5z" fill="#111" /></S></span>
    <div className="relative ml-[3px] flex h-[22px] w-[87px] items-center rounded-[2px] border border-[#e0e0e0] bg-gradient-to-b from-[#f4f4f4] to-[#cfcfcf] pl-[3px]">
      ug6<span className="absolute right-[3px] top-[9px]"><Caret c="#111" /></span>
    </div>
    <span className="ml-[7px]"><S w={20} h={22}><path d="M3 4l7 7v-9zM10 11l-8 9M10 11l8 9" stroke="#3a8ed8" fill="#8dc4f0" /><text x="14" y="10" fontSize="9" fill="#3a8ed8" fontFamily="Liberation Sans">X</text></S></span>
    <span className="ml-[6px]"><S w={20} h={22}><path d="M9 2l7 3v8zM10 12l-8 7M10 12l8 7" stroke="#3a8ed8" fill="#8dc4f0" /><text x="7" y="22" fontSize="9" fill="#3a8ed8" fontFamily="Liberation Sans">Y</text></S></span>
    <span className="ml-[5px] flex h-[24px] w-[24px] items-center justify-center rounded-[2px] border border-[#555] bg-[#d8d8d8]"><S w={20} h={20}><path d="M10 12l7-5-7-5-7 5z" transform="translate(0 7)" fill="#3a8ed8" /><path d="M10 9V1" stroke="#555" /><text x="1" y="9" fontSize="9" fill="#3a8ed8" fontFamily="Liberation Sans">Z</text></S></span>
    <span className="ml-[5px]"><S w={16} h={22}><path d="M3 14V4a3 3 0 0 1 7 0v3H6" stroke="#333" strokeWidth="1.5" fill="none" /><rect x="5" y="11" width="11" height="11" rx="1" fill="#333" /><path d="M6 14h9M6 17h9" stroke="#999" /></S></span>
    <span className="ml-[21px]"><S w={20} h={20}><path d="M0 3h20M0 8h20M0 13h20M0 18h20M3 0v20M8 0v20M13 0v20M18 0v20" stroke="#aaa" /></S></span>
    <SField w="w-[52px]" ml="ml-[6px]" />
    <SField w="w-[55px]" ml="ml-[15px]">-669.02</SField>
    <SField w="w-[55px]" ml="ml-1">314.225</SField>
    <SField w="w-[55px]" ml="ml-[5px]">0</SField>
    <span className="ml-[7px]"><S w={20} h={20}><rect x=".5" y=".5" width="19" height="19" fill="#eee" stroke="#bbb" /><path d="M8 5h9M8 10h9M8 15h9" stroke="#bbb" /><path d="M3 4l2 2M3 9l2 2M3 14l2 2" stroke="#aaa" /></S></span>
    <span className="ml-[6px]"><S w={20} h={20}><circle cx="15" cy="4" r="3.4" fill="#ccc" /><circle cx="4" cy="16" r="2.6" fill="none" stroke="#ccc" /><path d="M6 14l7-7" stroke="#ccc" /></S></span>
    <SField w="w-[88px]" ml="ml-[7px]" />
    <span className="ml-[14px]"><S w={22} h={24}><rect x=".5" y="1" width="13" height="21" fill="#ccc" stroke="#777" /><path d="M3 8h8M3 12h8M3 16h8" stroke="#888" strokeWidth="2" strokeDasharray="2 1" /><path d="M14 12h3v12h-3zM19 12h3v12h-3z" fill={BLUE} /></S></span>
    <span className="ml-[15px]"><S w={24} h={24}><path d="M1 2v9h22V2M5 5v6M9 3v8M13 5v6M17 3v8M21 5v6" stroke={BLUE} fill="none" /><text x="1" y="22" fontSize="10" fill={BLUE} fontFamily="Liberation Sans">0 1 2</text></S></span>
    <SField w="w-[55px]" ml="ml-[3px]">毫米</SField>
    <span className="ml-[5px]"><S w={24} h={24}><circle cx="12" cy="12" r="8.5" fill="none" stroke={BLUE} /><path d="M12 0v24M0 12h24" stroke={BLUE} /></S></span>
    <SField w="w-[56px]" ml="ml-px" />
    <span className="ml-[5px]"><S w={20} h={24}><path d="M9 1h10v10l-3 5h-4l-3-5z" fill="#fff" stroke={BLUE} /><path d="M0 13h2M4 13h2M12 19h4M12 22h4" stroke={BLUE} /></S></span>
    <SField w="w-[56px]" ml="ml-[5px]" />
    <span className="ml-[12px]"><S w={14} h={24}><path d="M2 1h10v10l-3 5H5l-3-5z" fill="#fff" stroke={BLUE} /><path d="M5 19h4M5 22h4" stroke={BLUE} /></S></span>
    <SField w="w-[55px]" ml="ml-[5px]" />
    <span className="ml-[9px]"><S w={17} h={20}><circle cx="8.5" cy="10" r="7" fill="none" stroke="#3a8ed8" /><path d="M1 19L16 1" stroke="#3a8ed8" /></S></span>
    <SField w="w-[55px]" ml="ml-[6px]">2.0</SField>
    <span className="ml-[4px]"><S w={20} h={22}><path d="M19 1L4 19" stroke="#3a8ed8" /><path d="M2 10v11h11" stroke={BLUE} fill="none" strokeWidth="1.5" /></S></span>
    <SField w="w-[55px]" ml="ml-[7px]">1.0</SField>
  </div>
)

export default function App() {
  return (
    <div className="relative flex h-[1038px] w-[1746px] flex-col overflow-hidden bg-[#f0f0f0] font-['Liberation_Sans','Noto_Sans_CJK_SC',sans-serif] text-[12px] text-[#111]">
      {/* title bar */}
      <div className="flex h-[26px] shrink-0 items-center">
        <div className="ml-[3px] flex h-[16px] w-[15px] items-center justify-center rounded-[2px] bg-gradient-to-br from-[#f6d9a8] to-[#e8a860] text-[13px] font-bold leading-none text-[#b8621c]">P</div>
        <div className="ml-[700px] whitespace-nowrap text-[13px] text-[#aaaaaa]">
          <span className="tracking-[0.1px]">Autodesk PowerMill Ultimate 2020</span><span className="ml-[14px]">[ 可编辑项目 * 201-zz ]</span>
        </div>
      </div>

      {/* tabs */}
      <div className="flex h-[29px] shrink-0 items-stretch bg-[#f0f0f0] text-[12px] text-[#222]">
        <div className="flex w-[50px] items-center justify-center bg-[#666] text-white">文件</div>
        <div className="z-10 ml-[3px] -mb-px flex w-[51px] items-center justify-center border-x border-t border-[#c8c8c8] bg-white">开始</div>
        {TABS.map(([t, w], i) => (
          <div key={i} className="flex h-full shrink-0 items-center border-r border-[#bdbdbd] px-[4px]" style={{ width: w }}>
            <div className={`w-full overflow-hidden whitespace-nowrap text-center ${t === 'ker' ? 'text-[13px]' : ''} ${t.startsWith('Option') ? 'text-[13px] tracking-[0.5px]' : ''}`}>{t}</div>
          </div>
        ))}
      </div>

      <div className="h-px shrink-0 bg-[#c8c8c8]" />
      <Ribbon />
      <QuickBar />

      {/* main area */}
      <div className="flex min-h-0 flex-1">
        {/* resource manager */}
        <div className="flex w-[413px] shrink-0 flex-col">
          <div className="flex h-10 shrink-0 items-center justify-between pl-[4px] pr-[10px]">
            <span className="text-[21px] leading-none text-[#222]">资源管理器</span>
            <span className="text-[15px] text-[#666]">✕</span>
          </div>
          <div className="flex h-[35px] shrink-0 items-stretch border-b-2 border-[#c8c8c8]">
            <div className="z-10 ml-[2px] -mb-[2px] flex w-[41px] items-center justify-center border-x border-t border-[#c8c8c8] bg-white pt-1">
              <S w={23} h={22}>
                <rect x="0" y="0" width="15" height="6" fill="#6aaee6" />
                <path d="M3 6v15h6M3 12h6" stroke="#555" fill="none" />
                <rect x="9" y="8" width="13" height="5" fill="#fff" stroke="#666" /><rect x="9" y="16" width="13" height="5" fill="#fff" stroke="#666" />
              </S>
            </div>
            <div className="ml-[4px] flex w-[20px] items-center justify-center pt-1">
              <S w={20} h={20}><circle cx="10" cy="10" r="9.5" fill="#5aa5e0" stroke="#666" /><path d="M3 5l5-2 1 4-4 3 1 4-3-1zM13 2l4 4-3 2zM12 12l5 0-2 5-3-1z" fill="#3f9a4f" /></S>
            </div>
            <div className="ml-[17px] flex w-[16px] items-center justify-center pt-1">
              <S w={16} h={21}><rect x="1" y="5" width="14" height="16" fill="#6aaee6" stroke="#555" /><rect x="0" y="3" width="16" height="2.5" fill="#555" /><rect x="4" y="0" width="8" height="3" fill="none" stroke="#555" /></S>
            </div>
          </div>
          <div className="flex min-h-0 flex-1 bg-white">
            <div className="min-w-0 flex-1 overflow-hidden pt-1">
              {LEFT.map((n, i) => <LeftRow key={i} n={n} />)}
            </div>
            <Scrollbar gapTop="h-[275px]" thumb="h-[148px]" className="mt-1 mr-[5px]" />
          </div>
        </div>

        {/* side toolbar */}
        <div className="flex w-[54px] shrink-0 flex-col border-x border-[#c8c8c8]">
          <div className="flex h-[39px] shrink-0 items-center justify-end border-b border-[#c8c8c8] pr-[9px] text-[15px] text-[#666]">✕</div>
          <div className="flex flex-1 flex-col items-center bg-white">
            {SIDE.map((s, i) => (
              <div key={i} className={`relative flex shrink-0 items-center justify-center ${s.mt} ${s.sel ? 'h-[38px] w-[40px] rounded-[3px] border-2 border-[#777] bg-[#e8e8e8]' : 'h-9 w-10'}`}>
                <svg width={38} height={36} viewBox="0 0 38 36" className="block">
                  {s.el}
                  {s.corner ? <Corner /> : null}
                </svg>
              </div>
            ))}
          </div>
        </div>

        {/* viewport */}
        <div className="relative min-w-0 flex-1 overflow-hidden border-l border-[#aaa] bg-gradient-to-b from-[#f0f0f0] to-[#727272]">
          <ViewBar />
          <Model />
          <Triad />
          {/* dropdown tree */}
          <div className="absolute left-[142px] top-[49px] flex h-[480px] w-[299px] overflow-hidden border border-[#666] bg-white">
            <div className="min-w-0 flex-1 overflow-hidden pt-px">
              {DROP.map((n, i) => <DropRow key={i} n={n} />)}
            </div>
            <Scrollbar gapTop="h-[2px]" thumb="h-[67px]" />
          </div>
        </div>
      </div>

      <StatusBar />

      {/* IME badge */}
      <div className="absolute left-[1669px] top-[868px] flex h-[27px] w-[77px] items-center rounded-l-[3px] bg-[#f4f6f8]">
        <div className="flex h-[27px] w-[25px] items-center justify-center rounded-[3px] bg-[#ee5a24] text-[22px] font-bold leading-none text-white">S</div>
        <span className="ml-[5px] text-[15px] font-bold leading-none text-[#1a7fd6]">中</span>
        <span className="ml-[4px]"><S w={14} h={16}><path d="M9 1a7 7 0 1 1-8 11c5 1 9-4 8-11z" fill="#1a7fd6" /></S></span>
      </div>

      {/* watermark */}
      <div className="pointer-events-none absolute left-[1463px] top-[942px] flex items-start">
        <S w={72} h={82}>
          <path d="M36 0l36 20v42L36 82 0 62V20z" fill="#62bdec" fillOpacity=".6" />
          <path d="M36 14l24 13v28L36 68 12 55V27z" fill="none" stroke="#555" strokeOpacity=".45" strokeWidth="4" />
          <path d="M36 28l14 8-14 8-14-8zM22 36l14 8v16l-14-8z" fill="#7cc6ee" fillOpacity=".8" />
          <path d="M50 36v16l-14 8V44z" fill="#2a7fb0" fillOpacity=".8" />
        </S>
        <div className="ml-[8px] flex flex-col">
          <span className="mt-[11px] text-[42px] font-bold leading-[42px] tracking-[-0.5px] text-white/35">3D世界网</span>
          <span className="mt-[4px] text-[12px] leading-none tracking-[5.2px] text-white/40">WWW.3DSJW.COM</span>
        </div>
      </div>
    </div>
  )
}
